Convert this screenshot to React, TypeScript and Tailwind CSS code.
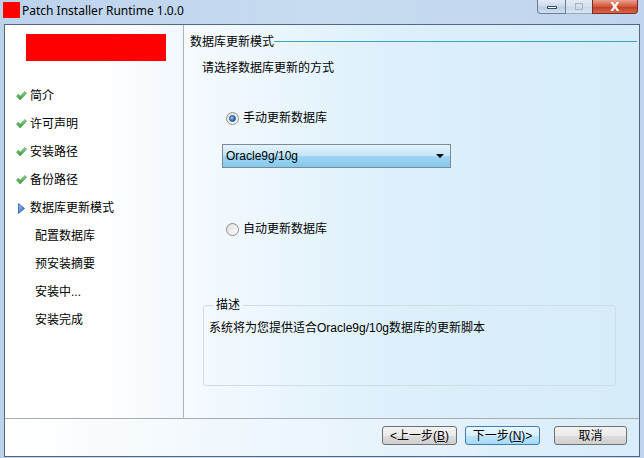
import React from 'react';

const cjk = { fontFamily: '"Liberation Sans", "Noto Sans CJK SC", sans-serif' };

function Check() {
  return (
    <svg width="11" height="10" viewBox="0 0 11 10" className="shrink-0">
      <defs>
        <linearGradient id="ck" x1="0" y1="0" x2="0" y2="1">
          <stop offset="0" stopColor="#8fd88a" />
          <stop offset="1" stopColor="#2e9a3a" />
        </linearGradient>
      </defs>
      <polygon points="0.5,5 2.5,3.2 4.2,5.2 9,0.5 10.5,2.2 4.2,9" fill="url(#ck)" stroke="#3f8f45" strokeWidth="0.6" />
    </svg>
  );
}

function Arrow() {
  return (
    <svg width="7" height="11" viewBox="0 0 7 11" className="shrink-0">
      <defs>
        <linearGradient id="ar" x1="0" y1="0" x2="1" y2="1">
          <stop offset="0" stopColor="#9cc6f2" />
          <stop offset="1" stopColor="#2460c0" />
        </linearGradient>
      </defs>
      <polygon points="0.5,0.5 6.5,5.5 0.5,10.5" fill="url(#ar)" stroke="#2a5ca8" strokeWidth="0.8" />
    </svg>
  );
}

function Radio({ checked }: { checked?: boolean }) {
  return (
    <span className="relative flex h-[13px] w-[13px] shrink-0 items-center justify-center rounded-full border border-[#8e8f8f] bg-[linear-gradient(135deg,#dcdcdc,#ffffff)]">
      {checked && (
        <span className="h-[7px] w-[7px] rounded-full border border-[#1c4f86] bg-[radial-gradient(circle_at_35%_35%,#9fd0ff,#2a6fb8_60%,#174f8c)]" />
      )}
    </span>
  );
}

function Button({ label, focus }: { label: React.ReactNode; focus?: boolean }) {
  return (
    <button
      className={
        focus
          ? 'flex h-[19px] w-full items-center justify-center rounded-[3px] border border-[#3c7fb1] bg-[linear-gradient(#eaf6fd_0%,#d9f0fc_50%,#bee6fd_51%,#a7d9f5_100%)] text-[12px] leading-none text-black'
          : 'flex h-[19px] w-full items-center justify-center rounded-[3px] border border-[#707070] bg-[linear-gradient(#f2f2f2_0%,#ebebeb_50%,#dddddd_51%,#cfcfcf_100%)] text-[12px] leading-none text-black'
      }
      style={cjk}
    >
      {label}
    </button>
  );
}

const steps = [
  { t: '简介', s: 'done' },
  { t: '许可声明', s: 'done' },
  { t: '安装路径', s: 'done' },
  { t: '备份路径', s: 'done' },
  { t: '数据库更新模式', s: 'cur' },
  { t: '配置数据库', s: 'todo' },
  { t: '预安装摘要', s: 'todo' },
  { t: '安装中...', s: 'todo' },
  { t: '安装完成', s: 'todo' },
];

export default function App() {
  return (
    <div className="flex h-[458px] w-[644px] flex-col overflow-hidden bg-[linear-gradient(90deg,#bcd3ec,#c8dcf1_50%,#bfd5ed)]">
      {/* title bar */}
      <div className="flex h-[24px] shrink-0 items-start">
        <div className="ml-[3px] mt-[2px] h-[16px] w-[17px] bg-[#ff0000]" />
        <div className="ml-[2px] mt-[3px] text-[12px] leading-[16px] text-black" style={{ fontFamily: '"Noto Sans", sans-serif' }}>
          Patch Installer Runtime 1.0.0
        </div>
        <div className="ml-auto mr-[6px] flex h-[14px]">
          <div className="flex h-[14px] w-[29px] items-center justify-center rounded-bl-[4px] border border-t-0 border-[#6d7d91] bg-[linear-gradient(#e3ecf6,#c9d8ea_50%,#b8cbe2_51%,#cfdff0)]">
            <span className="mt-[2px] h-[3px] w-[10px] border border-[#3d4f66] bg-white" />
          </div>
          <div className="flex h-[14px] w-[26px] items-center justify-center border-b border-[#9aaabd] bg-[linear-gradient(#e3ecf6,#d3e0ee_50%,#c8d7e8_51%,#d8e5f2)]">
            <span className="h-[7px] w-[8px] border border-[#a6b4c4]" />
          </div>
          <div className="flex h-[14px] w-[46px] items-center justify-center rounded-br-[4px] border border-t-0 border-[#7a2a22] bg-[linear-gradient(#e9a08f,#d2563e_50%,#c33a22_51%,#d6664b)] text-[12px] font-bold leading-none text-white" style={{ fontFamily: '"DejaVu Sans", sans-serif' }}>
            X
          </div>
        </div>
      </div>

      {/* client */}
      <div className="mx-[4px] flex h-[433px] flex-col border border-[#55687e] bg-white">
        <div className="flex h-[393px]">
          {/* left panel */}
          <div className="flex w-[179px] flex-col border-r border-[#aeb4ba] bg-[linear-gradient(90deg,#ffffff_55%,#f1f7fd)] pl-[21px] pt-[9px]">
            <div className="h-[27px] w-[140px] bg-[#ff0000]" />
            <div className="mt-[21px] flex flex-col" style={cjk}>
              {steps.map((s) => (
                <div key={s.t} className="flex h-[28px] items-center text-[12px] text-black">
                  {s.s === 'done' && (
                    <span className="-ml-[10px] mr-[3px] flex w-[11px]">
                      <Check />
                    </span>
                  )}
                  {s.s === 'cur' && (
                    <span className="-ml-[8px] mr-[5px] flex w-[7px]">
                      <Arrow />
                    </span>
                  )}
                  <span className={s.s === 'todo' ? 'ml-[9px]' : ''}>{s.t}</span>
                </div>
              ))}
            </div>
          </div>

          {/* right panel */}
          <div className="flex flex-1 flex-col bg-[linear-gradient(90deg,#f6fbff_0%,#ddf0fb_45%,#d5ecf9_100%)] pl-[6px] pr-[2px] pt-[9px] text-[12px] text-black" style={cjk}>
            <div className="flex h-[16px] items-center">
              <span className="leading-[16px]">数据库更新模式</span>
              <span className="-mt-[2px] h-px flex-1 bg-[#3ea3bd]" />
            </div>
            <div className="ml-[12px] mt-[10px] h-[16px] leading-[16px]">请选择数据库更新的方式</div>

            <div className="ml-[36px] mt-[34px] flex h-[16px] items-center gap-[4px]">
              <Radio checked />
              <span className="leading-[16px]">手动更新数据库</span>
            </div>

            <div className="ml-[32px] mt-[18px] flex h-[24px] w-[229px] items-center border border-[#7a8a99] bg-[linear-gradient(#e4f4fc_0%,#c4e5f6_48%,#9dd5f3_52%,#87c8ec_100%)] pl-[3px] pr-[6px]">
              <span className="flex-1 text-[12px]">Oracle9g/10g</span>
              <span className="h-0 w-0 border-l-[4px] border-r-[4px] border-t-[4px] border-l-transparent border-r-transparent border-t-black" />
            </div>

            <div className="ml-[36px] mt-[53px] flex h-[16px] items-center gap-[4px]">
              <Radio />
              <span className="leading-[16px]">自动更新数据库</span>
            </div>

            <fieldset className="ml-[13px] mt-[60px] h-[89px] w-[413px] rounded-[3px] border border-[#cfdde6] px-[5px]">
              <legend className="ml-[4px] px-[3px] text-[12px] leading-[16px]">描述</legend>
              <div className="mt-[7px] leading-[16px]">系统将为您提供适合Oracle9g/10g数据库的更新脚本</div>
            </fieldset>
          </div>
        </div>

        {/* bottom bar */}
        <div className="flex flex-1 items-start justify-end border-t border-[#a8acb0] bg-[linear-gradient(90deg,#ffffff_0%,#eef7fd_40%,#d8ecf9_100%)] pr-[12px] pt-[7px]">
          <div className="w-[75px]">
            <Button label={<span>&lt;上一步(<u>B</u>)</span>} />
          </div>
          <div className="ml-[8px] w-[75px]">
            <Button focus label={<span>下一步(<u>N</u>)&gt;</span>} />
          </div>
          <div className="ml-[14px] w-[73px]">
            <Button label="取消" />
          </div>
        </div>
      </div>
    </div>
  );
}
